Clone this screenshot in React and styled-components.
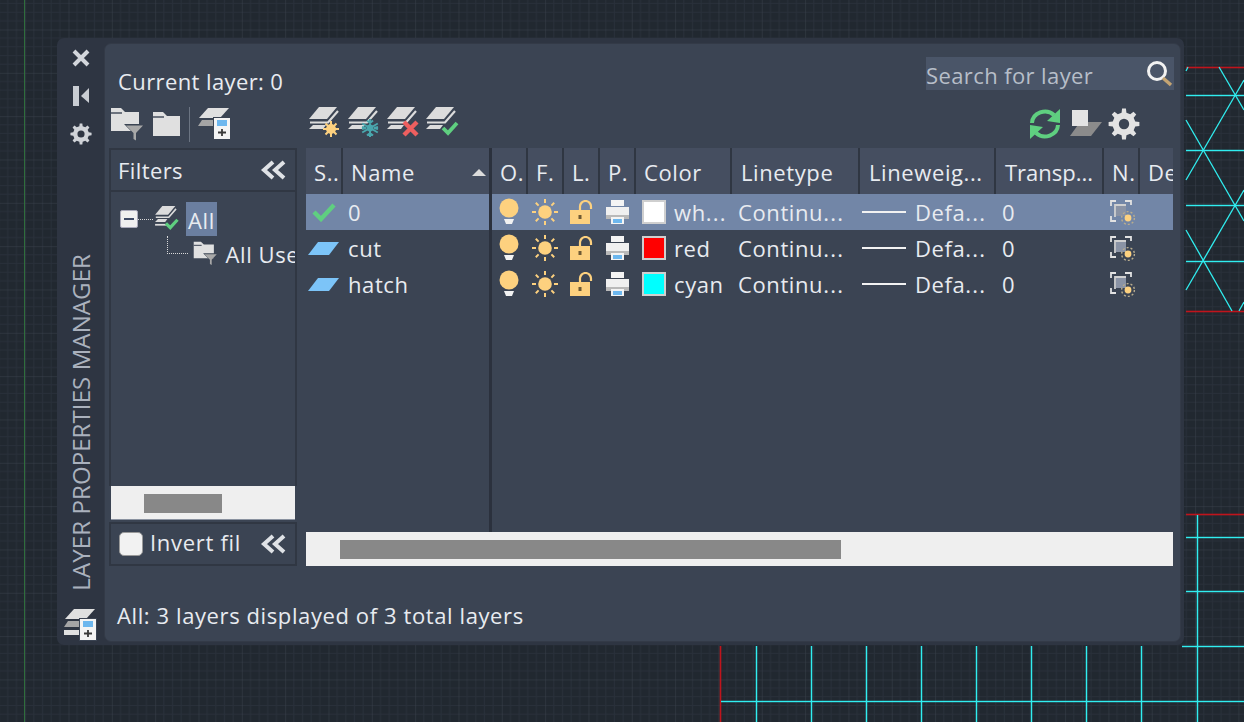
import React from "react";
import styled, { createGlobalStyle } from "styled-components";

const GlobalStyle = createGlobalStyle`
  html, body {
    margin: 0;
    padding: 0;
    background: #212830;
    overflow: hidden;
  }
  * {
    box-sizing: border-box;
  }
`;

const FONT = `"Open Sans", "Noto Sans", "Liberation Sans", sans-serif`;
const YELLOW = "#fdd17f";
const GREEN = "#5fcf80";
const ICON_GREY = "#e0e0e0";

const Stage = styled.div`
  position: relative;
  width: 1244px;
  height: 722px;
  padding: 38px 60px 0 57px;
  font-family: ${FONT};
  font-size: 22px;
  letter-spacing: 0.6px;
  color: #e8ebf0;
  overflow: hidden;
`;

const CanvasSvg = styled.svg`
  position: absolute;
  left: 0;
  top: 0;
`;

const Palette = styled.div`
  position: relative;
  width: 1127px;
  height: 607px;
  display: flex;
  background: #2e3542;
  border-radius: 7px;
`;

const Sidebar = styled.div`
  width: 47px;
  display: flex;
  flex-direction: column;
  align-items: center;
  padding: 8px 0 3px;
`;

const SideButton = styled.div`
  width: 24px;
  height: 24px;
  margin-bottom: 14px;
  display: flex;
  align-items: center;
  justify-content: center;
`;

const SideLabel = styled.div`
  margin-top: auto;
  margin-bottom: 17px;
  writing-mode: vertical-rl;
  transform: rotate(180deg);
  font-size: 24px;
  line-height: 24px;
  letter-spacing: 0.1px;
  color: #aab1bd;
  white-space: nowrap;
`;

const Inner = styled.div`
  width: 1077px;
  margin-top: 5px;
  height: 599px;
  display: flex;
  flex-direction: column;
  background: #3b4453;
  border: 1px solid #333a47;
  border-radius: 7px;
  padding: 0 6px 0 4px;
`;

const TopRow = styled.div`
  height: 60px;
  display: flex;
  justify-content: space-between;
  padding: 13px 0 0 9px;
`;

const CurrentLayer = styled.div`
  line-height: 28px;
  margin-top: 10px;
  letter-spacing: 0.4px;
`;

const SearchBox = styled.div`
  position: relative;
  width: 248px;
  height: 33px;
  padding-top: 2px;
  background: #4a5568;
  color: #b7bec9;
  line-height: 33px;
  letter-spacing: 0.4px;
  white-space: nowrap;
`;

const SearchIcon = styled.svg`
  position: absolute;
  right: 0;
  top: 2px;
`;

const ToolRow = styled.div`
  height: 44px;
  padding-bottom: 4px;
  display: grid;
  grid-template-columns: 188px 867px;
  column-gap: 9px;
  align-items: center;
`;

const ToolGroup = styled.div`
  display: flex;
  align-items: center;
  gap: ${(props) => props.$gap || 9}px;
  padding-left: ${(props) => props.$pad || 0}px;
  padding-right: ${(props) => props.$padRight || 0}px;
`;

const ToolDivider = styled.div`
  width: 1px;
  height: 35px;
  background: #6b7482;
`;

const ToolSpacer = styled.div`
  flex: 1;
`;

const Body = styled.div`
  display: grid;
  grid-template-columns: 188px 867px;
  column-gap: 9px;
  height: 418px;
`;

const FilterPanel = styled.div`
  display: flex;
  flex-direction: column;
`;

const FilterHeader = styled.div`
  height: 44px;
  display: flex;
  align-items: center;
  justify-content: space-between;
  padding: 0 9px 0 7px;
  border: 2px solid #303743;
  background: #3b4453;
  letter-spacing: 0.4px;
`;

const Tree = styled.div`
  flex: 1;
  min-height: 0;
  padding: 10px 0 0 9px;
  overflow: hidden;
  border-left: 2px solid #303743;
  border-right: 2px solid #303743;
  white-space: nowrap;
  svg {
    flex-shrink: 0;
  }
`;

const TreeRow = styled.div`
  display: flex;
  align-items: center;
  height: ${(props) => props.$height}px;
  margin-left: ${(props) => props.$indent || 0}px;
`;

const Expander = styled.div`
  width: 18px;
  height: 18px;
  flex-shrink: 0;
  border-radius: 2px;
  background: #f0f0f0;
  border: 1px solid #aab;
  display: flex;
  align-items: center;
  justify-content: center;
  &::after {
    content: "";
    width: 10px;
    height: 2px;
    background: #3e4a66;
  }
`;

const DotLine = styled.div`
  width: ${(props) => props.$width}px;
  height: 1px;
  flex-shrink: 0;
  border-top: 1px dotted #d8d8d8;
  margin-right: ${(props) => props.$after || 0}px;
`;

const Elbow = styled.div`
  width: 21px;
  height: 18px;
  flex-shrink: 0;
  margin: -18px 5px 0 0;
  border-left: 1px dotted #d8d8d8;
  border-bottom: 1px dotted #d8d8d8;
`;

const Selected = styled.span`
  display: block;
  height: 34px;
  line-height: 36px;
  padding: 0 2px;
  margin-left: 7px;
  background: #6b7fa0;
`;

const TreeText = styled.span`
  margin-left: 8px;
`;

const Track = styled.div`
  height: ${(props) => props.$height}px;
  background: #efefef;
  padding: 8px 0 0 ${(props) => props.$left}px;
  flex-shrink: 0;
`;

const Thumb = styled.div`
  width: ${(props) => props.$width}px;
  height: 19px;
  background: #888888;
`;

const FilterTrack = styled(Track)`
  margin: 0 2px;
  border-bottom: 1px solid #8a92a0;
`;

const FilterFooter = styled.div`
  height: 44px;
  margin-top: 2px;
  display: flex;
  align-items: center;
  padding: 0 9px 0 8px;
  border: 2px solid #303743;
`;

const CheckBox = styled.div`
  width: 24px;
  height: 24px;
  border-radius: 5px;
  background: #f2f2f2;
  border: 1px solid #999;
  margin-right: 7px;
`;

const FooterText = styled.span`
  flex: 1;
  white-space: nowrap;
  line-height: 26px;
  margin-bottom: 4px;
  letter-spacing: 0.7px;
`;

const TablePanel = styled.div`
  display: flex;
  flex-direction: column;
`;

const TableArea = styled.div`
  flex: 1;
  display: grid;
  grid-template-columns: 183px 3px 681px;
`;

const Pane = styled.div`
  display: flex;
  flex-direction: column;
`;

const PaneDivider = styled.div`
  background: #2b313d;
`;

const LEFT_COLUMNS = "35px 146px";
const RIGHT_COLUMNS = "34px 34px 34px 34px 94px 126px 134px 106px 34px 33px";

const HeadRow = styled.div`
  height: 46px;
  display: grid;
  grid-template-columns: ${(props) => props.$columns};
  column-gap: 2px;
  background: #2f3642;
`;

const HeadCell = styled.div`
  background: #454e60;
  line-height: 48px;
  padding-left: ${(props) => props.$pad || 8}px;
  letter-spacing: ${(props) => (props.$tight ? 0 : 0.6)}px;
  white-space: nowrap;
  overflow: hidden;
  position: relative;
`;

const Dots = styled.span`
  letter-spacing: 1.2px;
`;

const SortArrow = styled.div`
  position: absolute;
  right: 3px;
  top: 21px;
  width: 0;
  height: 0;
  border-left: 7px solid transparent;
  border-right: 7px solid transparent;
  border-bottom: 7px solid #dcdcdc;
`;

const Row = styled.div`
  height: 36px;
  display: grid;
  grid-template-columns: ${(props) => props.$columns};
  column-gap: 2px;
  align-items: center;
  background: ${(props) => (props.$selected ? "#7286a7" : "transparent")};
  line-height: 36px;
  white-space: nowrap;
`;

const IconCell = styled.div`
  display: flex;
  align-items: center;
  justify-content: center;
  height: 36px;
`;

const ViewportCell = styled(IconCell)`
  padding-left: 4px;
`;

const TextCell = styled.div`
  padding-left: ${(props) => props.$pad || 6}px;
  overflow: hidden;
`;

const ColorCell = styled.div`
  display: flex;
  align-items: center;
  padding-left: 6px;
`;

const Swatch = styled.div`
  width: 24px;
  height: 24px;
  background: ${(props) => props.$color};
  border: 2px solid #cfcfcf;
  margin-right: 8px;
`;

const WeightCell = styled.div`
  display: flex;
  align-items: center;
  padding-left: 2px;
`;

const WeightLine = styled.div`
  width: 44px;
  height: 2px;
  background: #f2f2f2;
  margin-right: 9px;
`;

const Status = styled.div`
  flex: 1;
  padding: 34px 0 0 8px;
  line-height: 30px;
`;

const LayerButton = styled.svg`
  margin-bottom: 4px;
`;

const RefreshSvg = styled.svg`
  margin-right: 2px;
`;

/* canvas drawing behind the palette */
const Canvas = () => {
  const cyanH = [95, 150, 205, 261];
  const cyanLow = [537, 591, 646];
  const cyanV = [756, 811, 866, 921, 976, 1031, 1086, 1141];
  const diagonals = [
    [1219, 67, 1244, 110],
    [1186, 120, 1244, 221],
    [1186, 230, 1232, 311],
    [1186, 180, 1244, 80],
    [1186, 290, 1244, 190],
    [1239, 311, 1244, 302],
    [1186, 71, 1188, 67],
  ];
  const redLines = (
    <>
      <line x1="1186" y1="67.5" x2="1244" y2="67.5" />
      <line x1="1186" y1="311.5" x2="1244" y2="311.5" />
      <line x1="1186" y1="514.5" x2="1244" y2="514.5" />
      <line x1="720.5" y1="646" x2="720.5" y2="722" />
    </>
  );
  const cyanLines = (
    <>
      {cyanH.map((y) => (
        <line key={y} x1="1186" y1={y + 0.5} x2="1244" y2={y + 0.5} />
      ))}
      {cyanLow.map((y) => (
        <line key={y} x1={y === 646 ? 1182 : 1186} y1={y + 0.5} x2="1244" y2={y + 0.5} />
      ))}
      <line x1="1197.5" y1="515" x2="1197.5" y2="722" />
      {cyanV.map((x) => (
        <line key={x} x1={x + 0.5} y1="646" x2={x + 0.5} y2="722" />
      ))}
      <line x1="721" y1="701.5" x2="1244" y2="701.5" />
    </>
  );
  return (
    <CanvasSvg width="1244" height="722">
      <defs>
        <pattern id="grid" width="43.33" height="43.33" patternUnits="userSpaceOnUse" patternTransform="translate(68.5 29.5)">
          {[8.66, 17.33, 26, 34.66].map((v) => (
            <g key={v} stroke="#29303a" strokeWidth="1">
              <line x1={v} y1="0" x2={v} y2="43.33" />
              <line x1="0" y1={v} x2="43.33" y2={v} />
            </g>
          ))}
          <line x1="0" y1="0" x2="0" y2="43.33" stroke="#3a414c" strokeWidth="1" />
          <line x1="0" y1="0" x2="43.33" y2="0" stroke="#3a414c" strokeWidth="1" />
        </pattern>
      </defs>
      <rect width="1244" height="722" fill="#212830" />
      <rect width="1244" height="722" fill="url(#grid)" />
      <line x1="24.5" y1="0" x2="24.5" y2="722" stroke="#2f6e3c" />
      <g stroke="#c0141c" strokeWidth="3" strokeOpacity="0.3">{redLines}</g>
      <g stroke="#c0141c" strokeWidth="1" shapeRendering="crispEdges">{redLines}</g>
      <g stroke="#30eef0" strokeWidth="3" strokeOpacity="0.22">{cyanLines}</g>
      <g stroke="#30eef0" strokeWidth="1" shapeRendering="crispEdges">{cyanLines}</g>
      <g stroke="#30eef0" strokeWidth="1.3">
        {diagonals.map((d, i) => (
          <line key={i} x1={d[0]} y1={d[1]} x2={d[2]} y2={d[3]} />
        ))}
      </g>
    </CanvasSvg>
  );
};

const gearPoints = (cx, cy, outer, inner, teeth) => {
  const pts = [];
  const step = (Math.PI * 2) / teeth;
  for (let i = 0; i < teeth; i++) {
    const a = i * step - Math.PI / 2;
    const w = step * 0.2;
    const list = [
      [a - w * 1.35, inner],
      [a - w * 0.8, outer],
      [a + w * 0.8, outer],
      [a + w * 1.35, inner],
    ];
    list.forEach(([t, r]) => pts.push(`${(cx + Math.cos(t) * r).toFixed(2)},${(cy + Math.sin(t) * r).toFixed(2)}`));
  }
  return pts.join(" ");
};

const Gear = ({ size, fill, hole }) => (
  <svg width={size} height={size} viewBox="0 0 32 32">
    <polygon points={gearPoints(16, 16, 15.5, 11.5, 8)} fill={fill} />
    <circle cx="16" cy="16" r="5.2" fill={hole} />
  </svg>
);

const CloseIcon = () => (
  <svg width="18" height="18" viewBox="0 0 18 18">
    <path d="M2 2 L16 16 M16 2 L2 16" stroke="#d3d6dc" strokeWidth="4" />
  </svg>
);

const PinIcon = () => (
  <svg width="18" height="22" viewBox="0 0 18 22">
    <rect x="1" y="1" width="6" height="20" fill="#c9cdd3" />
    <polygon points="17,3 17,18 9,11" fill="#c9cdd3" />
  </svg>
);

const Chevrons = () => (
  <svg width="26" height="20" viewBox="0 0 26 20">
    <path d="M13 2 L4 10 L13 18 M24 2 L15 10 L24 18" fill="none" stroke="#dfe2e6" strokeWidth="4" />
  </svg>
);

const FolderFilterIcon = ({ scale = 1 }) => (
  <svg width={34 * scale} height={34 * scale} viewBox="0 0 34 34">
    <path d="M1 1 H11 L15 5 H29 V24 H1 Z" fill={ICON_GREY} />
    <path d="M1 6 H12" stroke="#3b4453" strokeWidth="1.4" />
    <polygon points="14,17 35,17 27,26 27,34 23,32 23,26" fill="#3b4453" />
    <polygon points="16,18.5 33,18.5 26,26 26,33.5 23.5,32 23.5,26" fill="#a8a8a8" />
  </svg>
);

const FolderIcon = () => (
  <svg width="29" height="26" viewBox="0 0 29 26">
    <path d="M1 1 H11 L15 5 H28 V25 H1 Z" fill={ICON_GREY} />
    <path d="M1 6 H12" stroke="#3b4453" strokeWidth="1.4" />
  </svg>
);

const NewGroupIcon = ({ stack }) => (
  <svg width="34" height="34" viewBox="0 0 34 34">
    <polygon points="10,1 31,1 22,11 1,11" fill={ICON_GREY} />
    <polygon points="4,13 16,13 16,19 0,19" fill="#a5a5a5" />
    {stack && <polygon points="0,22 16,22 16,27 0,27" fill={ICON_GREY} />}
    <rect x="15.5" y="10.5" width="17" height="22" fill="#f4f4f4" stroke="#3b4453" strokeWidth="1" />
    <rect x="19" y="13" width="10" height="6" fill="#6db7ee" />
    <path d="M20 25.5 H28 M24 22 V29" stroke="#3a3a3a" strokeWidth="1.8" />
  </svg>
);

const StackShape = () => (
  <>
    <polygon points="10,0 28,0 18,12 0,12" fill="#dcdcdc" />
    <path d="M29 4 L19 15.5 H1" fill="none" stroke="#dcdcdc" strokeWidth="2.2" />
    <polygon points="4,18 17,18 14,22 0,22" fill="#dcdcdc" />
  </>
);

const NewLayerIcon = () => (
  <LayerButton width="33" height="31" viewBox="0 0 33 31">
    <StackShape />
    <g stroke={YELLOW} strokeWidth="2">
      <path d="M22 14 V30 M14 22 H30 M16.5 16.5 L27.5 27.5 M27.5 16.5 L16.5 27.5" />
    </g>
    <circle cx="22" cy="22" r="5" fill={YELLOW} />
  </LayerButton>
);

const FreezeLayerIcon = () => (
  <LayerButton width="33" height="31" viewBox="0 0 33 31">
    <StackShape />
    <circle cx="22" cy="21" r="3.4" fill="#49a6ad" />
    <path
      d="M22 12 V30 M14.2 16.5 L29.8 25.5 M29.8 16.5 L14.2 25.5 M19 13.5 L22 16 L25 13.5 M19 28.5 L22 26 L25 28.5 M14 20 L18 21 L14 22 M30 20 L26 21 L30 22"
      fill="none"
      stroke="#49a6ad"
      strokeWidth="2"
    />
  </LayerButton>
);

const DeleteLayerIcon = () => (
  <LayerButton width="33" height="31" viewBox="0 0 33 31">
    <StackShape />
    <path d="M17 15 L30 28 M30 15 L17 28" stroke="#ee5f5f" strokeWidth="4.4" />
  </LayerButton>
);

const CurrentLayerIcon = () => (
  <LayerButton width="33" height="31" viewBox="0 0 33 31">
    <StackShape />
    <path d="M17 21 L22 26 L31 16" fill="none" stroke={GREEN} strokeWidth="3.8" />
  </LayerButton>
);

const SmallStackIcon = () => (
  <svg width="24" height="26" viewBox="0 0 33 36">
    <StackShape />
    <path d="M0 26 H16" stroke="#dcdcdc" strokeWidth="2.4" />
    <path d="M15 24 L21 30 L31 19" fill="none" stroke={GREEN} strokeWidth="4.4" />
  </svg>
);

const RefreshIcon = () => (
  <RefreshSvg width="34" height="32" viewBox="0 0 34 32">
    <path d="M4 15 A13 12 0 0 1 26 7" fill="none" stroke={GREEN} strokeWidth="4" />
    <path d="M30 17 A13 12 0 0 1 8 25" fill="none" stroke={GREEN} strokeWidth="4" />
    <polygon points="32,1 32,15 19,13" fill={GREEN} />
    <polygon points="2,31 2,17 15,19" fill={GREEN} />
  </RefreshSvg>
);

const DisplayIcon = () => (
  <svg width="32" height="28" viewBox="0 0 32 28">
    <polygon points="10,12 32,12 21,26 0,26" fill="#8b8b8b" />
    <rect x="2" y="0" width="16" height="16" fill="#e3e3e3" />
  </svg>
);

const BulbIcon = () => (
  <svg width="20" height="28" viewBox="0 0 20 28">
    <circle cx="10" cy="10" r="9.5" fill={YELLOW} />
    <polygon points="5,21 15,21 13,26 7,26" fill="#f2f2f2" />
  </svg>
);

const SunIcon = () => (
  <svg width="28" height="28" viewBox="0 0 28 28">
    <circle cx="14" cy="14" r="6.8" fill={YELLOW} />
    <path
      d="M14 1 V5 M14 23 V27 M1 14 H5 M23 14 H27 M4.8 4.8 L7.6 7.6 M20.4 20.4 L23.2 23.2 M23.2 4.8 L20.4 7.6 M7.6 20.4 L4.8 23.2"
      stroke={YELLOW}
      strokeWidth="2"
    />
  </svg>
);

const LockIcon = () => (
  <svg width="24" height="25" viewBox="0 0 24 25">
    <rect x="1" y="10" width="20" height="14" fill={YELLOW} />
    <path d="M11 10 V6.5 A5.5 5.5 0 0 1 22 6.5 V9" fill="none" stroke={YELLOW} strokeWidth="2.2" />
    <rect x="9.5" y="15" width="3" height="4" fill="#6e5a35" />
  </svg>
);

const PrinterIcon = () => (
  <svg width="25" height="26" viewBox="0 0 25 26">
    <rect x="6" y="1" width="13" height="6" fill="#f4f4f4" />
    <rect x="1" y="8" width="23" height="8" fill="#f0f0f0" />
    <rect x="1" y="16" width="23" height="4" fill="#b9b9b9" />
    <rect x="6" y="18" width="13" height="7" fill="#f4f4f4" />
    <rect x="8" y="20" width="9" height="4" fill="#6db7ee" />
  </svg>
);

const ViewportIcon = () => (
  <svg width="26" height="25" viewBox="0 0 26 25">
    <path d="M1 6 V1 H6 M15 1 H21 V5 M1 16 V21 H6" fill="none" stroke="#e2e2e2" strokeWidth="1.8" />
    <path d="M5 17 V5 H16" fill="none" stroke="#d0d0d0" strokeWidth="1.8" />
    <rect x="6" y="6" width="10" height="10" fill="#8a93a5" />
    <circle cx="18" cy="18" r="3.4" fill={YELLOW} />
    <circle cx="18" cy="18" r="6.4" fill="none" stroke="#b9ad8e" strokeWidth="1.4" strokeDasharray="2 2" />
  </svg>
);

const CheckIcon = () => (
  <svg width="24" height="19" viewBox="0 0 24 19">
    <path d="M2 9 L9 16 L22 2" fill="none" stroke={GREEN} strokeWidth="4.4" />
  </svg>
);

const LayerSwatchIcon = () => (
  <svg width="31" height="13" viewBox="0 0 31 13">
    <polygon points="10,0 31,0 21,13 0,13" fill="#7cc4f8" />
  </svg>
);

const LAYERS = [
  { name: "0", color: "#ffffff", colorName: "wh", more: true, selected: true },
  { name: "cut", color: "#ff0000", colorName: "red" },
  { name: "hatch", color: "#00ffff", colorName: "cyan" },
];

const RIGHT_HEADS = [
  { label: "O." },
  { label: "F." },
  { label: "L." },
  { label: "P." },
  { label: "Color" },
  { label: "Linetype", pad: 9 },
  { label: "Lineweig...", pad: 9 },
  { label: "Transp...", pad: 9, tight: true },
  { label: "N." },
  { label: "De" },
];

const App = () => (
  <Stage>
    <GlobalStyle />
    <Canvas />
    <Palette>
      <Sidebar>
        <SideButton><CloseIcon /></SideButton>
        <SideButton><PinIcon /></SideButton>
        <SideButton><Gear size={22} fill="#d0d3d8" hole="#2e3542" /></SideButton>
        <SideLabel>LAYER PROPERTIES MANAGER</SideLabel>
        <NewGroupIcon stack />
      </Sidebar>
      <Inner>
        <TopRow>
          <CurrentLayer>Current layer: 0</CurrentLayer>
          <SearchBox>
            Search for layer
            <SearchIcon width="28" height="30" viewBox="0 0 28 30">
              <circle cx="11" cy="12" r="8.5" fill="none" stroke="#f2f2f2" strokeWidth="3" />
              <path d="M17 19 L25 26" stroke="#c4a473" strokeWidth="3.4" />
            </SearchIcon>
          </SearchBox>
        </TopRow>
        <ToolRow>
          <ToolGroup $pad={1} $gap={8}>
            <FolderFilterIcon />
            <FolderIcon />
            <ToolDivider />
            <NewGroupIcon />
          </ToolGroup>
          <ToolGroup $pad={3} $gap={6} $padRight={33}>
            <NewLayerIcon />
            <FreezeLayerIcon />
            <DeleteLayerIcon />
            <CurrentLayerIcon />
            <ToolSpacer />
            <RefreshIcon />
            <DisplayIcon />
            <Gear size={32} fill="#e3e3e3" hole="#3b4453" />
          </ToolGroup>
        </ToolRow>
        <Body>
          <FilterPanel>
            <FilterHeader>
              Filters
              <Chevrons />
            </FilterHeader>
            <Tree>
              <TreeRow $height={34}>
                <Expander />
                <DotLine $width={15} $after={2} />
                <SmallStackIcon />
                <Selected>All</Selected>
              </TreeRow>
              <TreeRow $height={35} $indent={47}>
                <Elbow />
                <FolderFilterIcon scale={0.72} />
                <TreeText>All Use</TreeText>
              </TreeRow>
            </Tree>
            <FilterTrack $height={34} $left={33}>
              <Thumb $width={78} />
            </FilterTrack>
            <FilterFooter>
              <CheckBox />
              <FooterText>Invert fil</FooterText>
              <Chevrons />
            </FilterFooter>
          </FilterPanel>
          <TablePanel>
            <TableArea>
              <Pane>
                <HeadRow $columns={LEFT_COLUMNS}>
                  <HeadCell>S..</HeadCell>
                  <HeadCell>
                    Name
                    <SortArrow />
                  </HeadCell>
                </HeadRow>
                {LAYERS.map((layer) => (
                  <Row key={layer.name} $columns={LEFT_COLUMNS} $selected={layer.selected}>
                    <IconCell>{layer.selected ? <CheckIcon /> : <LayerSwatchIcon />}</IconCell>
                    <TextCell $pad={5}>{layer.name}</TextCell>
                  </Row>
                ))}
              </Pane>
              <PaneDivider />
              <Pane>
                <HeadRow $columns={RIGHT_COLUMNS}>
                  {RIGHT_HEADS.map((head) => (
                    <HeadCell key={head.label} $pad={head.pad} $tight={head.tight}>
                      {head.label}
                    </HeadCell>
                  ))}
                </HeadRow>
                {LAYERS.map((layer) => (
                  <Row key={layer.name} $columns={RIGHT_COLUMNS} $selected={layer.selected}>
                    <IconCell><BulbIcon /></IconCell>
                    <IconCell><SunIcon /></IconCell>
                    <IconCell><LockIcon /></IconCell>
                    <IconCell><PrinterIcon /></IconCell>
                    <ColorCell>
                      <Swatch $color={layer.color} />
                      <span>
                        {layer.colorName}
                        {layer.more && <Dots>...</Dots>}
                      </span>
                    </ColorCell>
                    <TextCell>Continu<Dots>...</Dots></TextCell>
                    <WeightCell>
                      <WeightLine />
                      <span>Defa<Dots>...</Dots></span>
                    </WeightCell>
                    <TextCell>0</TextCell>
                    <ViewportCell><ViewportIcon /></ViewportCell>
                    <div />
                  </Row>
                ))}
              </Pane>
            </TableArea>
            <Track $height={34} $left={34}>
              <Thumb $width={501} />
            </Track>
          </TablePanel>
        </Body>
        <Status>All: 3 layers displayed of 3 total layers</Status>
      </Inner>
    </Palette>
  </Stage>
);

export default App;
